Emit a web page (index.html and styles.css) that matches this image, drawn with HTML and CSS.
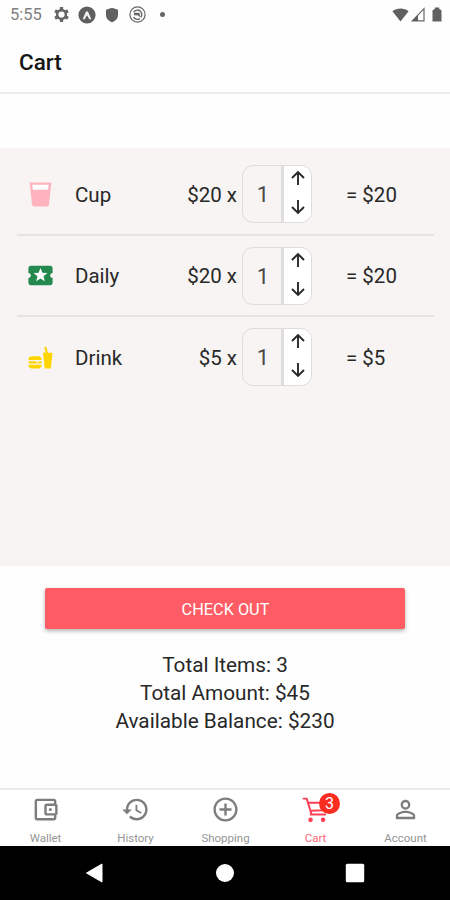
FILE: index.html
```
<!DOCTYPE html>
<html lang="en">
<head>
<meta charset="utf-8">
<title>Cart</title>
<link rel="stylesheet" href="styles.css">
</head>
<body>
<div class="status">
  <span class="time">5:55</span>
  <svg class="s-gear" width="17" height="17" viewBox="0 0 24 24"><path fill="none" stroke="#666" stroke-width="3.600" d="M12 5.800a6.200 6.200 0 1 0 0 12.400a6.200 6.200 0 1 0 0-12.400z"/><path fill="none" stroke="#666" stroke-width="4.600" d="M12 1.500v4M12 18.500v4M2.900 6.700l3.500 2M17.600 15.300l3.500 2M2.900 17.300l3.500-2M17.600 8.700l3.500-2"/></svg>
  <svg class="s-expo" width="18" height="18" viewBox="0 0 18 18"><circle cx="9" cy="9" r="8.600" fill="#5f5f5f"/><path d="M4.700 13L8.100 5.500h1.800L13.300 13l-1.700.6L9 9.200l-2.600 4.400z" fill="#f4f4f4"/></svg>
  <svg class="s-shield" width="14" height="16" viewBox="0 0 14 16"><path fill="#606060" d="M7 .8l6 2v5.200c0 3.300-2.400 6-6 7.200C3.400 14 1 11.300 1 8V2.800z"/></svg>
  <svg class="s-at" width="17" height="17" viewBox="0 0 17 17" fill="none" stroke="#666"><circle cx="8.500" cy="8.500" r="7.600" stroke-width="1.200"/><path stroke-width="1.400" d="M4.600 6.200C6 3.600 10.300 3.200 12 6c1.200 2 .7 4-.4 5.300M4.600 11.200c1.500 2.500 4.500 2.700 6.300 1.400"/><path fill="#666" stroke="none" d="M5 6.800h4.200c1.500 0 2 1.300 1.600 4.200L8.600 9.200H5z"/></svg>
  <span class="dot"></span>
  <svg class="s-wifi" width="17" height="14" viewBox="0 0 17 14"><path fill="#606060" d="M8.500 13.500L.4 3.200C4.800-.3 12.200-.3 16.600 3.200z"/></svg>
  <svg class="s-cell" width="14" height="15" viewBox="0 0 14 15"><path fill="none" stroke="#666" stroke-width="1.200" d="M1.300 13.800L13 1.700v12.100z"/><path fill="#606060" d="M1 14l6-6.300V14z"/></svg>
  <svg class="s-batt" width="10" height="15" viewBox="0 0 10 15"><path fill="#606060" d="M2.800.5h4.400V2L9.500 3.200V14.500H.5V3.200L2.800 2z"/></svg>
</div>
<header class="header">Cart</header>
<main class="list">
  <div class="row">
    <svg class="item-icon" viewBox="0 0 24 24"><path fill="#fff" d="M5 4h14v5H5z"/><path fill="#ffb3be" d="M18.320 8H5.670L5.230 4h13.540M3 2l2 18.230C5.130 21.230 5.970 22 7 22h10c1 0 1.870-.77 2-1.770L21 2z"/></svg>
    <span class="name">Cup</span><span class="price">$20 x</span>
    <div class="stepper"><span class="qty">1</span><div class="arrows"><svg viewBox="0 0 16 16"><path d="M8 15V2M2 8l6-6 6 6"/></svg><svg viewBox="0 0 16 16"><path d="M8 1v13M2 8l6 6 6-6"/></svg></div></div>
    <span class="sum">= $20</span>
  </div>
  <div class="row">
    <svg class="item-icon" viewBox="0 0 24 24"><path fill="#fff" d="M6 5h12v12H6z"/><path fill="#23894f" d="M20 12c0-1.100.9-2 2-2V6c0-1.100-.9-2-2-2H4c-1.100 0-1.990.9-1.990 2v4c1.100 0 1.990.9 1.990 2s-.89 2-2 2v4c0 1.100.9 2 2 2h16c1.100 0 2-.9 2-2v-4c-1.100 0-2-.9-2-2zm-4.420 4.800L12 14.500l-3.580 2.300 1.080-4.120-3.290-2.690 4.240-.25L12 5.800l1.540 3.950 4.240.25-3.290 2.690z"/></svg>
    <span class="name">Daily</span><span class="price">$20 x</span>
    <div class="stepper"><span class="qty">1</span><div class="arrows"><svg viewBox="0 0 16 16"><path d="M8 15V2M2 8l6-6 6 6"/></svg><svg viewBox="0 0 16 16"><path d="M8 1v13M2 8l6 6 6-6"/></svg></div></div>
    <span class="sum">= $20</span>
  </div>
  <div class="row">
    <svg class="item-icon" viewBox="0 0 24 24"><path fill="#ffd500" d="M15.500 21L14 8h2.230L15.100 3.460 16.840 3l1.250 5H22l-1.500 13zM5 11h5a3 3 0 0 1 3 3H2a3 3 0 0 1 3-3m8 7a3 3 0 0 1-3 3H5a3 3 0 0 1-3-3zM3 15h5l1.500 1.500L11 15h1a1 1 0 0 1 0 2H3a1 1 0 0 1 0-2"/></svg>
    <span class="name">Drink</span><span class="price">$5 x</span>
    <div class="stepper"><span class="qty">1</span><div class="arrows"><svg viewBox="0 0 16 16"><path d="M8 15V2M2 8l6-6 6 6"/></svg><svg viewBox="0 0 16 16"><path d="M8 1v13M2 8l6 6 6-6"/></svg></div></div>
    <span class="sum">= $5</span>
  </div>
</main>
<section class="summary">
  <button class="checkout">CHECK OUT</button>
  <p>Total Items: 3</p>
  <p>Total Amount: $45</p>
  <p>Available Balance: $230</p>
</section>
<nav class="tabs">
  <a class="tab"><svg viewBox="0 0 24 24"><path d="M21 7.280V5c0-1.100-.9-2-2-2H5c-1.110 0-2 .9-2 2v14c0 1.100.89 2 2 2h14c1.100 0 2-.9 2-2v-2.280c.59-.35 1-.98 1-1.720V9c0-.74-.41-1.370-1-1.720zM20 9v6h-7V9zM5 19V5h14v2h-6c-1.100 0-2 .9-2 2v6c0 1.100.9 2 2 2h6v2z"/><circle cx="16" cy="12" r="1.300"/></svg><span>Wallet</span></a>
  <a class="tab"><svg viewBox="0 0 24 24"><path d="M13 3a9 9 0 0 0-9 9H1l3.890 3.890.07.14L9 12H6c0-3.870 3.130-7 7-7s7 3.130 7 7-3.130 7-7 7c-1.930 0-3.680-.79-4.940-2.060l-1.420 1.420A8.954 8.954 0 0 0 13 21a9 9 0 0 0 0-18zm-1 5v5l4.280 2.540.72-1.210-3.500-2.080V8z"/></svg><span>History</span></a>
  <a class="tab"><svg viewBox="0 0 24 24"><path d="M13 7h-2v4H7v2h4v4h2v-4h4v-2h-4zM12 2C6.480 2 2 6.480 2 12s4.480 10 10 10 10-4.480 10-10S17.520 2 12 2zm0 18c-4.410 0-8-3.590-8-8s3.590-8 8-8 8 3.590 8 8-3.590 8-8 8z"/></svg><span>Shopping</span></a>
  <a class="tab active"><svg viewBox="0 0 28 28"><path fill="none" stroke="currentColor" stroke-width="1.900" stroke-linejoin="round" stroke-linecap="round" d="M2.500 3.500h3l4.500 14.500M6.700 7.500h17.500l-2.800 7.200-11.600.6M9.300 18.800h14"/><circle cx="9.200" cy="24" r="2.200"/><circle cx="21.300" cy="24" r="2.200"/></svg><span>Cart</span><b class="badge">3</b></a>
  <a class="tab"><svg viewBox="0 0 24 24"><path d="M12 5.900a2.100 2.100 0 1 1 0 4.200 2.100 2.100 0 0 1 0-4.200m0 9c2.970 0 6.100 1.460 6.100 2.100v1.100H5.900V17c0-.64 3.130-2.100 6.100-2.100M12 4C9.790 4 8 5.790 8 8s1.790 4 4 4 4-1.790 4-4-1.790-4-4-4zm0 9c-2.670 0-8 1.340-8 4v3h16v-3c0-2.660-5.330-4-8-4z"/></svg><span>Account</span></a>
</nav>
<footer class="system">
  <svg viewBox="0 0 20 20"><path d="M1.500 10L17 1v18z" stroke="#fff" stroke-linejoin="round"/></svg>
  <svg viewBox="0 0 20 20"><circle cx="10" cy="10" r="9"/></svg>
  <svg viewBox="0 0 20 20"><rect x=".8" y=".8" width="18.400" height="18.400" rx="1.500"/></svg>
</footer>
</body>
</html>
```
FILE: styles.css
```
* { box-sizing: border-box; }
body {
  margin: 0;
  width: 450px;
  height: 900px;
  overflow: hidden;
  display: flex;
  flex-direction: column;
  background: #fefefe;
  color: #282828;
  font-family: Roboto, sans-serif;
}
.status {
  height: 30px;
  display: flex;
  align-items: center;
  padding: 0 8px 1px 10px;
}
.time { width: 43px; font-size: 16.500px; color: #808080; }
.s-expo { margin-left: 8px; }
.s-shield { margin-left: 9px; }
.s-at { margin-left: 10px; }
.dot { width: 5px; height: 5px; margin-left: 14px; border-radius: 50%; background: #666; }
.s-wifi { margin-left: auto; }
.s-cell { margin-left: 2px; }
.s-batt { margin-left: 7px; }
.header {
  height: 64px;
  padding: 1px 0 0 19px;
  line-height: 62px;
  font-size: 22.500px;
  font-weight: 500;
  color: #151515;
  border-bottom: 2px solid #ececec;
}
.list {
  height: 418px;
  margin-top: 54px;
  padding: 6px 16px 0 17px;
  background: #f7f4f3;
}
.row {
  height: 81.5px;
  display: flex;
  align-items: center;
  padding: 1px 0 0 9px;
  font-size: 20.500px;
  border-bottom: 2px solid #e6e3e2;
}
.row:last-child { border-bottom-color: transparent; }
.item-icon { width: 29px; height: 29px; }
.name { width: 82px; margin-left: 20px; padding-top: 1px; }
.price { width: 80px; padding-top: 1px; text-align: right; }
.stepper {
  width: 70px;
  height: 58px;
  margin-left: 5px;
  display: flex;
  border: 1.500px solid #dfdcdb;
  border-radius: 11px;
  overflow: hidden;
}
.qty {
  flex: 1;
  padding-left: 2px;
  line-height: 58px;
  text-align: center;
  font-size: 22px;
  color: #484848;
}
.arrows {
  width: 30px;
  display: flex;
  flex-direction: column;
  align-items: center;
  justify-content: space-between;
  padding: 4px 0 7px;
  background: #fff;
  border-left: 3px solid #dfdddc;
}
.arrows svg { width: 16px; height: 16px; fill: none; stroke: #282828; stroke-width: 1.900; }
.sum { margin-left: 34px; padding-top: 1px; }
.summary {
  height: 222px;
  padding-top: 22px;
  text-align: center;
  font-size: 20.750px;
}
.checkout {
  display: block;
  width: 360px;
  height: 41px;
  margin: 0 auto 22px;
  padding: 1px 0 0 1px;
  border: 0;
  border-radius: 2px;
  background: #ff5c66;
  box-shadow: 0 2px 4px rgba(0, 0, 0, .3);
  color: #fff;
  font: 16.300px Roboto, sans-serif;
}
.summary p { margin: 0; line-height: 28px; }
.tabs {
  height: 58px;
  display: grid;
  grid-template-columns: repeat(5, 1fr);
  background: #fff;
  border-top: 2px solid #ececec;
}
.tab {
  position: relative;
  display: flex;
  flex-direction: column;
  align-items: center;
  padding-top: 5px;
  font-size: 11.500px;
  line-height: 14px;
  color: #7d7d7d;
}
.tab svg { width: 29px; height: 29px; margin-left: 1px; fill: currentColor; }
.tab span { margin-top: 7px; margin-left: 1px; color: #959595; }
.active { color: #ff4058; }
.tab.active span { color: #ff6678; }
.badge {
  position: absolute;
  left: 49px;
  top: 3px;
  width: 21px;
  height: 21px;
  border-radius: 50%;
  background: #fa2c20;
  color: #fff;
  font-size: 16px;
  font-weight: 400;
  line-height: 21px;
  text-align: center;
}
.system {
  height: 54px;
  display: flex;
  justify-content: center;
  gap: 110px;
  padding-top: 17px;
  background: #000;
}
.system svg { width: 20px; height: 20px; fill: #fff; }
```
